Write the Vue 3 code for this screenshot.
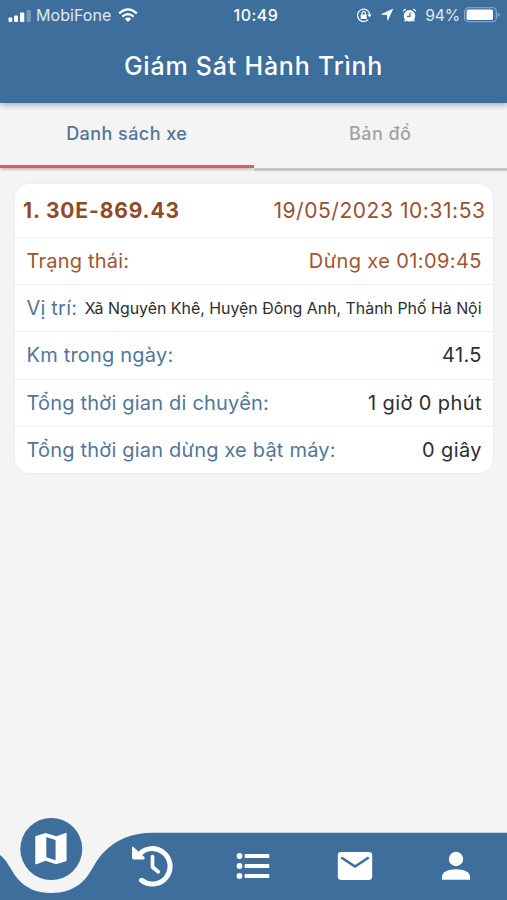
<script setup>
const plate = '1. 30E-869.43'
const updatedAt = '19/05/2023 10:31:53'
const rows = [
  { label: 'Trạng thái:', value: 'Dừng xe 01:09:45', kind: 'state' },
  { label: 'Vị trí:', value: 'Xã Nguyên Khê, Huyện Đông Anh, Thành Phố Hà Nội', kind: 'address' },
  { label: 'Km trong ngày:', value: '41.5', kind: 'distance' },
  { label: 'Tổng thời gian di chuyển:', value: '1 giờ 0 phút', kind: 'moving' },
  { label: 'Tổng thời gian dừng xe bật máy:', value: '0 giây', kind: 'idle' },
]
</script>

<template>
  <div class="screen">
    <header class="header">
      <div class="status">
        <div class="side left">
          <svg class="signal" width="24" height="14" viewBox="0 0 24 14" fill="#fff">
            <rect x=".5" y="8.500" width="3.800" height="4.500" rx="1" />
            <rect x="6" y="6.500" width="4" height="6.500" rx="1" />
            <rect x="12" y="3.500" width="4.300" height="9.500" rx="1" />
            <rect x="18.500" y="1" width="4.300" height="12" rx="1" opacity=".3" />
          </svg>
          <span class="carrier">MobiFone</span>
          <svg class="wifi" width="20" height="15" viewBox="0 0 20 15" fill="none" stroke="#fff">
            <path d="M1.200 5.300Q10-2.500 18.800 5.300" stroke-width="2.300" />
            <path d="M4.300 8.600Q10 3.600 15.700 8.600" stroke-width="2.200" />
            <path d="M6.800 10.800Q10 8.100 13.200 10.800L10 14Z" fill="#fff" stroke="none" />
          </svg>
        </div>
        <span class="clock">10:49</span>
        <div class="side right">
          <svg class="lock" width="16" height="15" viewBox="0 0 16 15" fill="none" stroke="#fff">
            <path d="M12.400 3.300A6.200 6.200 0 1 0 12.200 11.700" stroke-width="1.200" />
            <path d="M12.300 3.200A6 6 0 0 1 13.500 7" stroke-width="1.200" />
            <path d="M11.300 6.500H15.700L13.500 9.200Z" fill="#fff" stroke="none" />
            <rect x="4.700" y="6.600" width="6" height="4.400" rx=".6" fill="#fff" stroke="none" />
            <path d="M5.900 7V5.400a1.800 1.800 0 0 1 3.600 0V7" stroke-width="1.100" />
          </svg>
          <svg class="arrow" width="14" height="14" viewBox="0 0 14 14" fill="#fff">
            <path d="M13.300.5L7.600 13.300L6.900 7.100L.600 6.400Z" />
          </svg>
          <svg class="alarm" width="15" height="15" viewBox="0 0 15 15">
            <circle cx="7.500" cy="7.800" r="5.800" fill="#fff" />
            <path d="M.8 4A3 3 0 0 1 4.500.9ZM14.200 4A3 3 0 0 0 10.500.9Z" fill="#fff" />
            <path d="M3.800 11.500L2.700 13.300M11.200 11.500L12.300 13.300" stroke="#fff" stroke-width="1.500" />
            <path d="M8 4.500V8.300H5" fill="none" stroke="#3d6e9c" stroke-width="1.200" />
          </svg>
          <span class="percent">94%</span>
          <svg class="battery" width="36" height="16" viewBox="0 0 36 16">
            <rect x=".7" y=".7" width="31.600" height="14.100" rx="3.800" fill="none" stroke="#fff" stroke-opacity=".45" stroke-width="1.100" />
            <rect x="2.600" y="2.500" width="26.400" height="10.500" rx="1.600" fill="#fff" />
            <path d="M33.600 5.500Q35.500 6.200 35.500 7.800T33.600 10.100Z" fill="#fff" opacity=".45" />
          </svg>
        </div>
      </div>
      <h1 class="title">Giám Sát Hành Trình</h1>
    </header>

    <nav class="tabs">
      <div class="tab active">Danh sách xe</div>
      <div class="tab">Bản đồ</div>
    </nav>

    <main class="content">
      <article class="card">
        <div class="card-head">
          <strong class="plate">{{ plate }}</strong>
          <span class="time">{{ updatedAt }}</span>
        </div>
        <div v-for="row in rows" :key="row.label" class="row" :class="row.kind">
          <span class="label">{{ row.label }}</span>
          <span class="value">{{ row.value }}</span>
        </div>
      </article>
    </main>

    <footer class="bottom">
      <svg class="bar" width="507" height="85" viewBox="0 0 507 85" fill="#3d6e9c">
        <path d="M0 40C7 45 10 54 17 63C26 74 38 78 51 78S77 74 86 63C93 54 96 45 104 37C117 24 132 17.800 153 17.800H507V85H0Z" />
        <circle cx="51.300" cy="34" r="31" />
      </svg>
      <div class="items">
        <div class="item raised">
          <svg width="34" height="34" viewBox="0 0 34 34" fill="#fff" fill-rule="evenodd">
            <path d="M1.300 4.300L11.500 1L22.400 4.200L31.500.9Q32.600.6 32.600 1.700V29L22.200 32.200L11.500 28.700L2.500 32.200Q1.300 32.500 1.300 31.300ZM12.300 4.900V25.200L21.600 28.300V8Z" />
          </svg>
        </div>
        <div class="item">
          <svg width="42" height="42" viewBox="0 0 42 42" fill="none" stroke="#fff">
            <path d="M6.800 11.300A17.700 17.700 0 1 1 10.500 35.300" stroke-width="5" stroke-linecap="round" />
            <path d="M1.500 2.800Q1.500 1.500 2.600 2.600L13 12.300Q14 13.900 12.500 14H2.700Q1.500 14 1.500 12.800Z" fill="#fff" stroke-width="1" stroke-linejoin="round" />
            <path d="M21.500 11.500V22L27.200 26.700" stroke-width="3.700" stroke-linecap="round" stroke-linejoin="round" />
          </svg>
        </div>
        <div class="item">
          <svg width="34" height="28" viewBox="0 0 34 28" fill="#fff">
            <circle cx="3.500" cy="4" r="2.900" /><circle cx="3.500" cy="14" r="2.900" /><circle cx="3.500" cy="24" r="2.900" />
            <rect x="8.600" y="2.100" width="24.700" height="4" rx=".9" />
            <rect x="8.600" y="12.100" width="24.700" height="4" rx=".9" />
            <rect x="8.600" y="22.100" width="24.700" height="4" rx=".9" />
          </svg>
        </div>
        <div class="item">
          <svg width="36" height="30" viewBox="0 0 36 30">
            <rect x=".8" y="1" width="34.400" height="28" rx="3.400" fill="#fff" />
            <path d="M4.300 6.500L18 15.500L31.700 6.500" fill="none" stroke="#3d6e9c" stroke-width="2.600" />
          </svg>
        </div>
        <div class="item">
          <svg width="30" height="30" viewBox="0 0 30 30" fill="#fff">
            <circle cx="15" cy="8" r="7.200" />
            <path d="M1 28.700V25.500C1 21 7.500 18.200 15 18.200S29 21 29 25.500V28.700Z" />
          </svg>
        </div>
      </div>
    </footer>
  </div>
</template>

<style>
body {
  margin: 0;
  background: #f4f4f4;
}
</style>

<style scoped>
.screen {
  display: flex;
  flex-direction: column;
  width: 507px;
  height: 900px;
  overflow: hidden;
  background: #f4f4f4;
  font-family: Inter, "Liberation Sans", sans-serif;
  white-space: nowrap;
}
.header {
  flex: none;
  height: 103px;
  background: #3d6e9c;
  color: #fff;
  box-shadow: 0 2px 6px rgba(40, 60, 80, 0.4);
  z-index: 1;
}
.status {
  display: grid;
  grid-template-columns: 1fr auto 1fr;
  align-items: center;
  height: 30px;
  padding: 0 7px 0 8px;
  font-size: 16px;
}
.side {
  display: flex;
  align-items: center;
}
.right {
  justify-content: flex-end;
}
.signal {
  margin: 1px 4px 0 0;
}
.carrier {
  opacity: 0.85;
  letter-spacing: 0.05px;
}
.wifi {
  margin-left: 7px;
}
.clock {
  padding-left: 4px;
  font-weight: 500;
  letter-spacing: 0.5px;
}
.arrow {
  margin-left: 8px;
}
.alarm {
  margin: 0 8px;
}
.percent {
  opacity: 0.85;
  font-size: 15.700px;
  letter-spacing: -0.2px;
}
.battery {
  margin-left: 4px;
}
.title {
  display: flex;
  justify-content: center;
  align-items: center;
  height: 72px;
  margin: 0;
  font-size: 25px;
  font-weight: 500;
  letter-spacing: 0.78px;
}
.tabs {
  flex: none;
  display: flex;
  height: 68px;
  font-size: 18px;
  font-weight: 500;
  letter-spacing: 0.45px;
}
.tab {
  flex: 1;
  display: flex;
  justify-content: center;
  align-items: center;
  box-sizing: border-box;
  padding-bottom: 4px;
  color: #a2a2a3;
  border-bottom: 3px solid #c5c5c5;
}
.active {
  height: 65px;
  padding-bottom: 1px;
  color: #527699;
  border-bottom: 3px solid #dd5f60;
  box-shadow: 0 3px 2px -1px rgba(0, 0, 0, 0.18);
}
.content {
  flex: 1;
  padding: 13px 14px 0 15px;
}
.card {
  border-radius: 14px;
  background: #fff;
  box-shadow: 0 0 2px rgba(0, 0, 0, 0.08);
}
.card-head {
  display: flex;
  justify-content: space-between;
  align-items: center;
  height: 53px;
  padding: 0 8px;
  color: #8f4a28;
  font-size: 21px;
}
.plate {
  font-weight: 700;
  letter-spacing: 0.85px;
}
.time {
  margin-right: -0.5px;
  color: #945335;
  letter-spacing: 0.55px;
}
.row {
  display: flex;
  justify-content: space-between;
  align-items: center;
  box-sizing: border-box;
  height: 47.2px;
  padding: 0 11.5px;
  border-top: 1px solid #eeeeef;
  font-size: 20px;
}
.label {
  color: #527699;
  letter-spacing: 0.2px;
}
.value {
  margin-right: -0.4px;
  color: #2d2d30;
  letter-spacing: 0.4px;
}
.state .label,
.state .value {
  color: #a05534;
}
.address .value {
  margin-right: 0;
  font-size: 15.900px;
  letter-spacing: 0;
}
.bottom {
  position: relative;
  flex: none;
  height: 85px;
}
.bar {
  position: absolute;
  inset: 0;
}
.items {
  position: relative;
  display: grid;
  grid-template-columns: repeat(5, 1fr);
  height: 85px;
}
.item {
  display: flex;
  justify-content: center;
  align-items: center;
  padding-top: 17px;
}
.raised {
  align-items: flex-start;
}
</style>
